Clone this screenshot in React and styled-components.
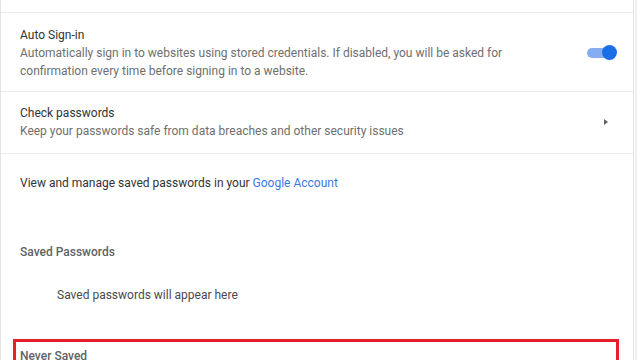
import styled, { createGlobalStyle } from 'styled-components'

const GlobalStyle = createGlobalStyle`
  body {
    margin: 0;
    background: #ffffff;
    font-family: Roboto, "Liberation Sans", Arial, sans-serif;
    font-size: 12px;
    overflow: hidden;
  }
`

const Page = styled.div`
  display: flex;
  height: 360px;
  overflow: hidden;
  background: #ffffff;
`

const Card = styled.div`
  width: 634px;
  border-left: 1px solid #e3e3e3;
  border-right: 1px solid #e3e3e3;
  padding-top: 12px;
  box-sizing: border-box;
`

const Gutter = styled.div`
  width: 2px;
  margin-left: 1px;
  background: #f0f0f0;
`

const Row = styled.div`
  display: flex;
  align-items: center;
  border-top: 1px solid #ececec;
  padding: ${(p) => p.$top}px ${(p) => p.$right}px ${(p) => p.$bottom}px 19px;
  line-height: 18px;
`

const RowText = styled.div`
  flex: 1;
`

const Title = styled.div`
  color: #333333;
`

const Desc = styled.div`
  color: #6f6f6f;
`

const Toggle = styled.div`
  position: relative;
  width: 30px;
  height: 14px;
  flex: none;
`

const Track = styled.div`
  position: absolute;
  left: 0;
  top: 2px;
  width: 25px;
  height: 10px;
  border-radius: 5px;
  background: #86acf2;
`

const Knob = styled.div`
  position: absolute;
  right: 0;
  top: -1px;
  width: 15px;
  height: 15px;
  border-radius: 50%;
  background: #1a6ee6;
`

const Arrow = styled.div`
  width: 0;
  height: 0;
  border-left: 4px solid #5f6368;
  border-top: 3.5px solid transparent;
  border-bottom: 3.5px solid transparent;
`

const LinkRow = styled.div`
  border-top: 1px solid #ececec;
  padding: 20px 19px 20px;
  line-height: 18px;
  color: #333333;
`

const Link = styled.a`
  color: #3b78e7;
  text-decoration: none;
`

const SectionHeader = styled.div`
  margin-top: 31px;
  padding-left: 19px;
  line-height: 18px;
  color: #5f6368;
  font-weight: 500;
`

const Empty = styled.div`
  margin-top: 25px;
  padding-left: 56px;
  line-height: 18px;
  color: #4a4a4a;
`

const Highlight = styled.div`
  margin: 35px 0 0 12px;
  width: 606px;
  height: 60px;
  border: 3px solid #e5202c;
  box-sizing: border-box;
  padding: 5px 0 0 4px;
  line-height: 18px;
  color: #5f6368;
  font-weight: 500;
`

export default function App() {
  return (
    <>
      <GlobalStyle />
      <Page>
        <Card>
          <Row $top={13} $bottom={11} $right={16}>
            <RowText>
              <Title>Auto Sign-in</Title>
              <Desc>
                Automatically sign in to websites using stored credentials. If disabled, you will be asked for
                <br />
                confirmation every time before signing in to a website.
              </Desc>
            </RowText>
            <Toggle>
              <Track />
              <Knob />
            </Toggle>
          </Row>
          <Row $top={12} $bottom={13} $right={25}>
            <RowText>
              <Title>Check passwords</Title>
              <Desc>Keep your passwords safe from data breaches and other security issues</Desc>
            </RowText>
            <Arrow />
          </Row>
          <LinkRow>
            View and manage saved passwords in your <Link href="#">Google Account</Link>
          </LinkRow>
          <SectionHeader>Saved Passwords</SectionHeader>
          <Empty>Saved passwords will appear here</Empty>
          <Highlight>Never Saved</Highlight>
        </Card>
        <Gutter />
      </Page>
    </>
  )
}
